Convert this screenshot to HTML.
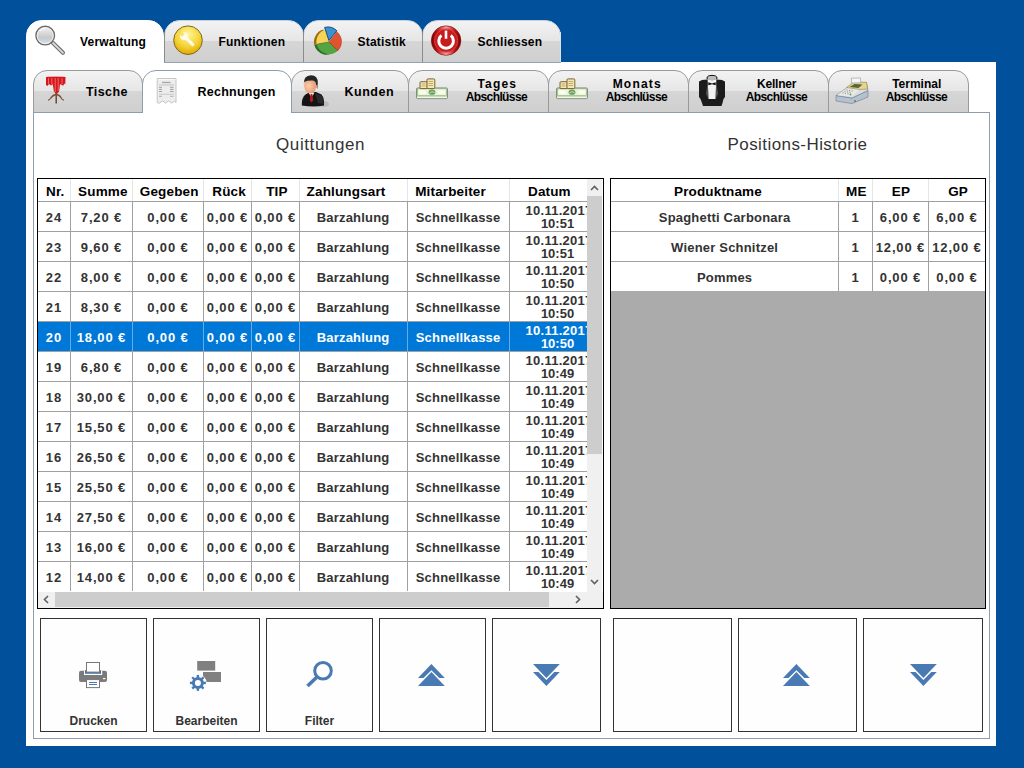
<!DOCTYPE html><html><head><meta charset="utf-8"><style>
*{margin:0;padding:0;box-sizing:border-box}
html,body{width:1024px;height:768px;overflow:hidden;background:#01509c;font-family:"Liberation Sans",sans-serif}
.a{position:absolute}
.t{position:absolute;white-space:nowrap;font-weight:bold}
.c{position:absolute;font-weight:bold;font-size:13px;color:#333;text-align:center;white-space:nowrap;line-height:15px}
.n{letter-spacing:0.85px;padding-left:0.85px}
.vl{position:absolute;width:1px;background:#a0a0a0}
.hl{position:absolute;height:1px;background:#a0a0a0}
.btn{position:absolute;border:1px solid #333;background:#fefefe}
svg{position:absolute;overflow:visible}
</style></head><body>

<div class="a" style="left:26px;top:62px;width:970px;height:684px;background:#fff"></div>
<svg width="0" height="0" style="left:0;top:0"><defs>
<linearGradient id="gi" x1="0" y1="0" x2="0" y2="1">
<stop offset="0" stop-color="#f3f3f3"/><stop offset="0.49" stop-color="#e6e6e6"/><stop offset="0.5" stop-color="#d6d6d6"/><stop offset="1" stop-color="#cfcfcf"/>
</linearGradient>
<radialGradient id="coin" cx="0.5" cy="0.3" r="0.7"><stop offset="0" stop-color="#fff59a"/><stop offset="0.6" stop-color="#f4d43a"/><stop offset="1" stop-color="#e0a800"/></radialGradient>
<radialGradient id="pwr" cx="0.5" cy="0.5" r="0.5"><stop offset="0.55" stop-color="#c81414"/><stop offset="0.85" stop-color="#e23a3a"/><stop offset="1" stop-color="#9a0a0a"/></radialGradient>
<linearGradient id="lens" x1="0" y1="0" x2="0" y2="1"><stop offset="0" stop-color="#f4f4f4"/><stop offset="0.6" stop-color="#c9c9c9"/><stop offset="1" stop-color="#cfe3f5"/></linearGradient>
</defs></svg>
<svg style="left:164px;top:20px" width="140" height="43"><path d="M0.5,42 L0.5,15.5 A15,15 0 0 1 15.5,0.5 L124.5,0.5 A15,15 0 0 1 139.5,15.5 L139.5,42 Z" fill="url(#gi)" stroke="none"/><path d="M0.5,42 L0.5,15.5 A15,15 0 0 1 15.5,0.5 L124.5,0.5 A15,15 0 0 1 139.5,15.5 L139.5,42" fill="none" stroke="#c8d2dc" stroke-width="1"/><path d="M0.5,42 L0.5,12" fill="none" stroke="#8c8c8c" stroke-width="1"/><path d="M139.5,12 L139.5,42" fill="none" stroke="#8c8c8c" stroke-width="1"/><line x1="0" y1="42.5" x2="140" y2="42.5" stroke="#94a3b3"/></svg>
<svg style="left:303px;top:20px" width="120" height="43"><path d="M0.5,42 L0.5,15.5 A15,15 0 0 1 15.5,0.5 L104.5,0.5 A15,15 0 0 1 119.5,15.5 L119.5,42 Z" fill="url(#gi)" stroke="none"/><path d="M0.5,42 L0.5,15.5 A15,15 0 0 1 15.5,0.5 L104.5,0.5 A15,15 0 0 1 119.5,15.5 L119.5,42" fill="none" stroke="#c8d2dc" stroke-width="1"/><path d="M0.5,42 L0.5,12" fill="none" stroke="#8c8c8c" stroke-width="1"/><path d="M119.5,12 L119.5,42" fill="none" stroke="#8c8c8c" stroke-width="1"/><line x1="0" y1="42.5" x2="120" y2="42.5" stroke="#94a3b3"/></svg>
<svg style="left:422px;top:20px" width="139" height="43"><path d="M0.5,42 L0.5,15.5 A15,15 0 0 1 15.5,0.5 L123.5,0.5 A15,15 0 0 1 138.5,15.5 L138.5,42 Z" fill="url(#gi)" stroke="none"/><path d="M0.5,42 L0.5,15.5 A15,15 0 0 1 15.5,0.5 L123.5,0.5 A15,15 0 0 1 138.5,15.5 L138.5,42" fill="none" stroke="#c8d2dc" stroke-width="1"/><path d="M0.5,42 L0.5,12" fill="none" stroke="#8c8c8c" stroke-width="1"/><path d="M138.5,12 L138.5,42" fill="none" stroke="#d8e0e8" stroke-width="1"/><line x1="0" y1="42.5" x2="139" y2="42.5" stroke="#94a3b3"/></svg>
<svg style="left:26px;top:20px" width="138" height="43"><path d="M0.5,42 L0.5,15.5 A15,15 0 0 1 15.5,0.5 L122.5,0.5 A15,15 0 0 1 137.5,15.5 L137.5,42 Z" fill="#fff" stroke="none"/><path d="M0.5,42 L0.5,15.5 A15,15 0 0 1 15.5,0.5 L122.5,0.5 A15,15 0 0 1 137.5,15.5 L137.5,42" fill="none" stroke="#ffffff" stroke-width="1"/></svg>
<div class="a" style="left:33px;top:112px;width:957px;height:627px;border:1px solid #8e9cab"></div>
<svg style="left:33px;top:70px" width="110" height="43"><path d="M0.5,42 L0.5,14.0 A13.5,13.5 0 0 1 14.0,0.5 L96.0,0.5 A13.5,13.5 0 0 1 109.5,14.0 L109.5,42 Z" fill="url(#gi)" stroke="none"/><path d="M0.5,42 L0.5,14.0 A13.5,13.5 0 0 1 14.0,0.5 L96.0,0.5 A13.5,13.5 0 0 1 109.5,14.0 L109.5,42" fill="none" stroke="#9a9a9a" stroke-width="1"/><line x1="0" y1="42.5" x2="110" y2="42.5" stroke="#8e9cab"/></svg>
<svg style="left:291px;top:70px" width="118" height="43"><path d="M0.5,42 L0.5,14.0 A13.5,13.5 0 0 1 14.0,0.5 L104.0,0.5 A13.5,13.5 0 0 1 117.5,14.0 L117.5,42 Z" fill="url(#gi)" stroke="none"/><path d="M0.5,42 L0.5,14.0 A13.5,13.5 0 0 1 14.0,0.5 L104.0,0.5 A13.5,13.5 0 0 1 117.5,14.0 L117.5,42" fill="none" stroke="#9a9a9a" stroke-width="1"/><line x1="0" y1="42.5" x2="118" y2="42.5" stroke="#8e9cab"/></svg>
<svg style="left:408px;top:70px" width="141" height="43"><path d="M0.5,42 L0.5,14.0 A13.5,13.5 0 0 1 14.0,0.5 L127.0,0.5 A13.5,13.5 0 0 1 140.5,14.0 L140.5,42 Z" fill="url(#gi)" stroke="none"/><path d="M0.5,42 L0.5,14.0 A13.5,13.5 0 0 1 14.0,0.5 L127.0,0.5 A13.5,13.5 0 0 1 140.5,14.0 L140.5,42" fill="none" stroke="#9a9a9a" stroke-width="1"/><line x1="0" y1="42.5" x2="141" y2="42.5" stroke="#8e9cab"/></svg>
<svg style="left:548px;top:70px" width="141" height="43"><path d="M0.5,42 L0.5,14.0 A13.5,13.5 0 0 1 14.0,0.5 L127.0,0.5 A13.5,13.5 0 0 1 140.5,14.0 L140.5,42 Z" fill="url(#gi)" stroke="none"/><path d="M0.5,42 L0.5,14.0 A13.5,13.5 0 0 1 14.0,0.5 L127.0,0.5 A13.5,13.5 0 0 1 140.5,14.0 L140.5,42" fill="none" stroke="#9a9a9a" stroke-width="1"/><line x1="0" y1="42.5" x2="141" y2="42.5" stroke="#8e9cab"/></svg>
<svg style="left:688px;top:70px" width="141" height="43"><path d="M0.5,42 L0.5,14.0 A13.5,13.5 0 0 1 14.0,0.5 L127.0,0.5 A13.5,13.5 0 0 1 140.5,14.0 L140.5,42 Z" fill="url(#gi)" stroke="none"/><path d="M0.5,42 L0.5,14.0 A13.5,13.5 0 0 1 14.0,0.5 L127.0,0.5 A13.5,13.5 0 0 1 140.5,14.0 L140.5,42" fill="none" stroke="#9a9a9a" stroke-width="1"/><line x1="0" y1="42.5" x2="141" y2="42.5" stroke="#8e9cab"/></svg>
<svg style="left:828px;top:70px" width="141" height="43"><path d="M0.5,42 L0.5,14.0 A13.5,13.5 0 0 1 14.0,0.5 L127.0,0.5 A13.5,13.5 0 0 1 140.5,14.0 L140.5,42 Z" fill="url(#gi)" stroke="none"/><path d="M0.5,42 L0.5,14.0 A13.5,13.5 0 0 1 14.0,0.5 L127.0,0.5 A13.5,13.5 0 0 1 140.5,14.0 L140.5,42" fill="none" stroke="#9a9a9a" stroke-width="1"/><line x1="0" y1="42.5" x2="141" y2="42.5" stroke="#8e9cab"/></svg>
<svg style="left:142px;top:70px" width="150" height="43"><path d="M0.5,42 L0.5,14.0 A13.5,13.5 0 0 1 14.0,0.5 L136.0,0.5 A13.5,13.5 0 0 1 149.5,14.0 L149.5,42 Z" fill="#fff" stroke="none"/><path d="M0.5,42 L0.5,14.0 A13.5,13.5 0 0 1 14.0,0.5 L136.0,0.5 A13.5,13.5 0 0 1 149.5,14.0 L149.5,42" fill="none" stroke="#8e9cab" stroke-width="1"/></svg>
<div class="a" style="left:143px;top:112px;width:148px;height:1px;background:#fff"></div>
<div class="t" style="left:80px;top:35px;font-size:12px;letter-spacing:0.2px;color:#000">Verwaltung</div>
<div class="t" style="left:218.5px;top:35px;font-size:12px;letter-spacing:0.2px;color:#000">Funktionen</div>
<div class="t" style="left:357.5px;top:35px;font-size:12px;letter-spacing:0.2px;color:#000">Statistik</div>
<div class="t" style="left:477.5px;top:35px;font-size:12px;letter-spacing:0.2px;color:#000">Schliessen</div>
<div class="t" style="left:86px;top:85px;font-size:12.5px;color:#000;letter-spacing:0.4px">Tische</div>
<div class="t" style="left:197.5px;top:85px;font-size:12.5px;color:#000;letter-spacing:0.25px">Rechnungen</div>
<div class="t" style="left:344.5px;top:85px;font-size:12.5px;color:#000;letter-spacing:0.5px">Kunden</div>
<div class="t" style="left:446.7px;width:100px;text-align:center;top:78px;font-size:12px;line-height:13px;color:#000"><span style="letter-spacing:1.2px;margin-right:-1.2px">Tages</span><br><span style="letter-spacing:-0.6px;margin-right:0.6px">Abschlüsse</span></div>
<div class="t" style="left:586.7px;width:100px;text-align:center;top:78px;font-size:12px;line-height:13px;color:#000"><span style="letter-spacing:1.2px;margin-right:-1.2px">Monats</span><br><span style="letter-spacing:-0.6px;margin-right:0.6px">Abschlüsse</span></div>
<div class="t" style="left:726.7px;width:100px;text-align:center;top:78px;font-size:12px;line-height:13px;color:#000"><span style="letter-spacing:-0.2px;margin-right:0.2px">Kellner</span><br><span style="letter-spacing:-0.6px;margin-right:0.6px">Abschlüsse</span></div>
<div class="t" style="left:866.7px;width:100px;text-align:center;top:78px;font-size:12px;line-height:13px;color:#000"><span style="letter-spacing:0px;margin-right:0px">Terminal</span><br><span style="letter-spacing:-0.6px;margin-right:0.6px">Abschlüsse</span></div>
<div class="t" style="left:276px;top:135px;font-size:17px;font-weight:normal;letter-spacing:0.6px;color:#333">Quittungen</div>
<div class="t" style="left:727.5px;top:135px;font-size:17px;font-weight:normal;letter-spacing:0.43px;color:#333">Positions-Historie</div>
<div class="a" style="left:37px;top:178px;width:567px;height:431px;border:1px solid #000;background:#fff;overflow:hidden">
<div class="t" style="left:8.0px;top:5px;font-size:13.5px;color:#000;letter-spacing:0.15px">Nr.</div>
<div class="t" style="left:40.10000000000001px;top:5px;font-size:13.5px;color:#000;letter-spacing:0.15px">Summe</div>
<div class="t" style="left:101.80000000000001px;top:5px;font-size:13.5px;color:#000;letter-spacing:0.15px">Gegeben</div>
<div class="t" style="left:174.3px;top:5px;font-size:13.5px;color:#000;letter-spacing:0.15px">Rück</div>
<div class="t" style="left:228.2px;top:5px;font-size:13.5px;color:#000;letter-spacing:0.15px">TIP</div>
<div class="t" style="left:268.59999999999997px;top:5px;font-size:13.5px;color:#000;letter-spacing:0.15px">Zahlungsart</div>
<div class="t" style="left:377.2px;top:5px;font-size:13.5px;color:#000;letter-spacing:0.15px">Mitarbeiter</div>
<div class="t" style="left:490.0px;top:5px;font-size:13.5px;color:#000;letter-spacing:0.15px">Datum</div>
<div class="a" style="left:32px;top:0px;width:1px;height:22px;background:#e6e6e6"></div>
<div class="a" style="left:94px;top:0px;width:1px;height:22px;background:#e6e6e6"></div>
<div class="a" style="left:165px;top:0px;width:1px;height:22px;background:#e6e6e6"></div>
<div class="a" style="left:213px;top:0px;width:1px;height:22px;background:#e6e6e6"></div>
<div class="a" style="left:261px;top:0px;width:1px;height:22px;background:#e6e6e6"></div>
<div class="a" style="left:369px;top:0px;width:1px;height:22px;background:#e6e6e6"></div>
<div class="a" style="left:471px;top:0px;width:1px;height:22px;background:#e6e6e6"></div>
<div class="hl" style="left:0px;top:22px;width:549px"></div>
<div class="c n" style="left:-1px;top:31px;width:33px;color:#333">24</div>
<div class="c n" style="left:32px;top:31px;width:62px;color:#333">7,20 €</div>
<div class="c n" style="left:94px;top:31px;width:71px;color:#333">0,00 €</div>
<div class="c n" style="left:165px;top:31px;width:48px;color:#333">0,00 €</div>
<div class="c n" style="left:213px;top:31px;width:48px;color:#333">0,00 €</div>
<div class="c" style="left:261px;top:31px;width:108px;color:#333;letter-spacing:0.2px;padding-left:0.2px">Barzahlung</div>
<div class="c" style="left:369px;top:31px;width:102px;color:#333;letter-spacing:0.2px;padding-left:0.2px">Schnellkasse</div>
<div class="c" style="left:471px;top:25px;width:97px;font-size:13px;line-height:13px;color:#333;letter-spacing:0px"><span style="letter-spacing:0.25px;position:relative;left:1.5px">10.11.2017</span><br>10:51</div>
<div class="hl" style="left:0px;top:52px;width:549px"></div>
<div class="c n" style="left:-1px;top:61px;width:33px;color:#333">23</div>
<div class="c n" style="left:32px;top:61px;width:62px;color:#333">9,60 €</div>
<div class="c n" style="left:94px;top:61px;width:71px;color:#333">0,00 €</div>
<div class="c n" style="left:165px;top:61px;width:48px;color:#333">0,00 €</div>
<div class="c n" style="left:213px;top:61px;width:48px;color:#333">0,00 €</div>
<div class="c" style="left:261px;top:61px;width:108px;color:#333;letter-spacing:0.2px;padding-left:0.2px">Barzahlung</div>
<div class="c" style="left:369px;top:61px;width:102px;color:#333;letter-spacing:0.2px;padding-left:0.2px">Schnellkasse</div>
<div class="c" style="left:471px;top:55px;width:97px;font-size:13px;line-height:13px;color:#333;letter-spacing:0px"><span style="letter-spacing:0.25px;position:relative;left:1.5px">10.11.2017</span><br>10:51</div>
<div class="hl" style="left:0px;top:82px;width:549px"></div>
<div class="c n" style="left:-1px;top:91px;width:33px;color:#333">22</div>
<div class="c n" style="left:32px;top:91px;width:62px;color:#333">8,00 €</div>
<div class="c n" style="left:94px;top:91px;width:71px;color:#333">0,00 €</div>
<div class="c n" style="left:165px;top:91px;width:48px;color:#333">0,00 €</div>
<div class="c n" style="left:213px;top:91px;width:48px;color:#333">0,00 €</div>
<div class="c" style="left:261px;top:91px;width:108px;color:#333;letter-spacing:0.2px;padding-left:0.2px">Barzahlung</div>
<div class="c" style="left:369px;top:91px;width:102px;color:#333;letter-spacing:0.2px;padding-left:0.2px">Schnellkasse</div>
<div class="c" style="left:471px;top:85px;width:97px;font-size:13px;line-height:13px;color:#333;letter-spacing:0px"><span style="letter-spacing:0.25px;position:relative;left:1.5px">10.11.2017</span><br>10:50</div>
<div class="hl" style="left:0px;top:112px;width:549px"></div>
<div class="c n" style="left:-1px;top:121px;width:33px;color:#333">21</div>
<div class="c n" style="left:32px;top:121px;width:62px;color:#333">8,30 €</div>
<div class="c n" style="left:94px;top:121px;width:71px;color:#333">0,00 €</div>
<div class="c n" style="left:165px;top:121px;width:48px;color:#333">0,00 €</div>
<div class="c n" style="left:213px;top:121px;width:48px;color:#333">0,00 €</div>
<div class="c" style="left:261px;top:121px;width:108px;color:#333;letter-spacing:0.2px;padding-left:0.2px">Barzahlung</div>
<div class="c" style="left:369px;top:121px;width:102px;color:#333;letter-spacing:0.2px;padding-left:0.2px">Schnellkasse</div>
<div class="c" style="left:471px;top:115px;width:97px;font-size:13px;line-height:13px;color:#333;letter-spacing:0px"><span style="letter-spacing:0.25px;position:relative;left:1.5px">10.11.2017</span><br>10:50</div>
<div class="hl" style="left:0px;top:142px;width:549px"></div>
<div class="a" style="left:0px;top:143px;width:549px;height:29px;background:#0078d7"></div>
<div class="c n" style="left:-1px;top:151px;width:33px;color:#fff">20</div>
<div class="c n" style="left:32px;top:151px;width:62px;color:#fff">18,00 €</div>
<div class="c n" style="left:94px;top:151px;width:71px;color:#fff">0,00 €</div>
<div class="c n" style="left:165px;top:151px;width:48px;color:#fff">0,00 €</div>
<div class="c n" style="left:213px;top:151px;width:48px;color:#fff">0,00 €</div>
<div class="c" style="left:261px;top:151px;width:108px;color:#fff;letter-spacing:0.2px;padding-left:0.2px">Barzahlung</div>
<div class="c" style="left:369px;top:151px;width:102px;color:#fff;letter-spacing:0.2px;padding-left:0.2px">Schnellkasse</div>
<div class="c" style="left:471px;top:145px;width:97px;font-size:13px;line-height:13px;color:#fff;letter-spacing:0px"><span style="letter-spacing:0.25px;position:relative;left:1.5px">10.11.2017</span><br>10:50</div>
<div class="hl" style="left:0px;top:172px;width:549px"></div>
<div class="c n" style="left:-1px;top:181px;width:33px;color:#333">19</div>
<div class="c n" style="left:32px;top:181px;width:62px;color:#333">6,80 €</div>
<div class="c n" style="left:94px;top:181px;width:71px;color:#333">0,00 €</div>
<div class="c n" style="left:165px;top:181px;width:48px;color:#333">0,00 €</div>
<div class="c n" style="left:213px;top:181px;width:48px;color:#333">0,00 €</div>
<div class="c" style="left:261px;top:181px;width:108px;color:#333;letter-spacing:0.2px;padding-left:0.2px">Barzahlung</div>
<div class="c" style="left:369px;top:181px;width:102px;color:#333;letter-spacing:0.2px;padding-left:0.2px">Schnellkasse</div>
<div class="c" style="left:471px;top:175px;width:97px;font-size:13px;line-height:13px;color:#333;letter-spacing:0px"><span style="letter-spacing:0.25px;position:relative;left:1.5px">10.11.2017</span><br>10:49</div>
<div class="hl" style="left:0px;top:202px;width:549px"></div>
<div class="c n" style="left:-1px;top:211px;width:33px;color:#333">18</div>
<div class="c n" style="left:32px;top:211px;width:62px;color:#333">30,00 €</div>
<div class="c n" style="left:94px;top:211px;width:71px;color:#333">0,00 €</div>
<div class="c n" style="left:165px;top:211px;width:48px;color:#333">0,00 €</div>
<div class="c n" style="left:213px;top:211px;width:48px;color:#333">0,00 €</div>
<div class="c" style="left:261px;top:211px;width:108px;color:#333;letter-spacing:0.2px;padding-left:0.2px">Barzahlung</div>
<div class="c" style="left:369px;top:211px;width:102px;color:#333;letter-spacing:0.2px;padding-left:0.2px">Schnellkasse</div>
<div class="c" style="left:471px;top:205px;width:97px;font-size:13px;line-height:13px;color:#333;letter-spacing:0px"><span style="letter-spacing:0.25px;position:relative;left:1.5px">10.11.2017</span><br>10:49</div>
<div class="hl" style="left:0px;top:232px;width:549px"></div>
<div class="c n" style="left:-1px;top:241px;width:33px;color:#333">17</div>
<div class="c n" style="left:32px;top:241px;width:62px;color:#333">15,50 €</div>
<div class="c n" style="left:94px;top:241px;width:71px;color:#333">0,00 €</div>
<div class="c n" style="left:165px;top:241px;width:48px;color:#333">0,00 €</div>
<div class="c n" style="left:213px;top:241px;width:48px;color:#333">0,00 €</div>
<div class="c" style="left:261px;top:241px;width:108px;color:#333;letter-spacing:0.2px;padding-left:0.2px">Barzahlung</div>
<div class="c" style="left:369px;top:241px;width:102px;color:#333;letter-spacing:0.2px;padding-left:0.2px">Schnellkasse</div>
<div class="c" style="left:471px;top:235px;width:97px;font-size:13px;line-height:13px;color:#333;letter-spacing:0px"><span style="letter-spacing:0.25px;position:relative;left:1.5px">10.11.2017</span><br>10:49</div>
<div class="hl" style="left:0px;top:262px;width:549px"></div>
<div class="c n" style="left:-1px;top:271px;width:33px;color:#333">16</div>
<div class="c n" style="left:32px;top:271px;width:62px;color:#333">26,50 €</div>
<div class="c n" style="left:94px;top:271px;width:71px;color:#333">0,00 €</div>
<div class="c n" style="left:165px;top:271px;width:48px;color:#333">0,00 €</div>
<div class="c n" style="left:213px;top:271px;width:48px;color:#333">0,00 €</div>
<div class="c" style="left:261px;top:271px;width:108px;color:#333;letter-spacing:0.2px;padding-left:0.2px">Barzahlung</div>
<div class="c" style="left:369px;top:271px;width:102px;color:#333;letter-spacing:0.2px;padding-left:0.2px">Schnellkasse</div>
<div class="c" style="left:471px;top:265px;width:97px;font-size:13px;line-height:13px;color:#333;letter-spacing:0px"><span style="letter-spacing:0.25px;position:relative;left:1.5px">10.11.2017</span><br>10:49</div>
<div class="hl" style="left:0px;top:292px;width:549px"></div>
<div class="c n" style="left:-1px;top:301px;width:33px;color:#333">15</div>
<div class="c n" style="left:32px;top:301px;width:62px;color:#333">25,50 €</div>
<div class="c n" style="left:94px;top:301px;width:71px;color:#333">0,00 €</div>
<div class="c n" style="left:165px;top:301px;width:48px;color:#333">0,00 €</div>
<div class="c n" style="left:213px;top:301px;width:48px;color:#333">0,00 €</div>
<div class="c" style="left:261px;top:301px;width:108px;color:#333;letter-spacing:0.2px;padding-left:0.2px">Barzahlung</div>
<div class="c" style="left:369px;top:301px;width:102px;color:#333;letter-spacing:0.2px;padding-left:0.2px">Schnellkasse</div>
<div class="c" style="left:471px;top:295px;width:97px;font-size:13px;line-height:13px;color:#333;letter-spacing:0px"><span style="letter-spacing:0.25px;position:relative;left:1.5px">10.11.2017</span><br>10:49</div>
<div class="hl" style="left:0px;top:322px;width:549px"></div>
<div class="c n" style="left:-1px;top:331px;width:33px;color:#333">14</div>
<div class="c n" style="left:32px;top:331px;width:62px;color:#333">27,50 €</div>
<div class="c n" style="left:94px;top:331px;width:71px;color:#333">0,00 €</div>
<div class="c n" style="left:165px;top:331px;width:48px;color:#333">0,00 €</div>
<div class="c n" style="left:213px;top:331px;width:48px;color:#333">0,00 €</div>
<div class="c" style="left:261px;top:331px;width:108px;color:#333;letter-spacing:0.2px;padding-left:0.2px">Barzahlung</div>
<div class="c" style="left:369px;top:331px;width:102px;color:#333;letter-spacing:0.2px;padding-left:0.2px">Schnellkasse</div>
<div class="c" style="left:471px;top:325px;width:97px;font-size:13px;line-height:13px;color:#333;letter-spacing:0px"><span style="letter-spacing:0.25px;position:relative;left:1.5px">10.11.2017</span><br>10:49</div>
<div class="hl" style="left:0px;top:352px;width:549px"></div>
<div class="c n" style="left:-1px;top:361px;width:33px;color:#333">13</div>
<div class="c n" style="left:32px;top:361px;width:62px;color:#333">16,00 €</div>
<div class="c n" style="left:94px;top:361px;width:71px;color:#333">0,00 €</div>
<div class="c n" style="left:165px;top:361px;width:48px;color:#333">0,00 €</div>
<div class="c n" style="left:213px;top:361px;width:48px;color:#333">0,00 €</div>
<div class="c" style="left:261px;top:361px;width:108px;color:#333;letter-spacing:0.2px;padding-left:0.2px">Barzahlung</div>
<div class="c" style="left:369px;top:361px;width:102px;color:#333;letter-spacing:0.2px;padding-left:0.2px">Schnellkasse</div>
<div class="c" style="left:471px;top:355px;width:97px;font-size:13px;line-height:13px;color:#333;letter-spacing:0px"><span style="letter-spacing:0.25px;position:relative;left:1.5px">10.11.2017</span><br>10:49</div>
<div class="hl" style="left:0px;top:382px;width:549px"></div>
<div class="c n" style="left:-1px;top:391px;width:33px;color:#333">12</div>
<div class="c n" style="left:32px;top:391px;width:62px;color:#333">14,00 €</div>
<div class="c n" style="left:94px;top:391px;width:71px;color:#333">0,00 €</div>
<div class="c n" style="left:165px;top:391px;width:48px;color:#333">0,00 €</div>
<div class="c n" style="left:213px;top:391px;width:48px;color:#333">0,00 €</div>
<div class="c" style="left:261px;top:391px;width:108px;color:#333;letter-spacing:0.2px;padding-left:0.2px">Barzahlung</div>
<div class="c" style="left:369px;top:391px;width:102px;color:#333;letter-spacing:0.2px;padding-left:0.2px">Schnellkasse</div>
<div class="c" style="left:471px;top:385px;width:97px;font-size:13px;line-height:13px;color:#333;letter-spacing:0px"><span style="letter-spacing:0.25px;position:relative;left:1.5px">10.11.2017</span><br>10:49</div>
<div class="vl" style="left:32px;top:23px;height:389px"></div>
<div class="vl" style="left:94px;top:23px;height:389px"></div>
<div class="vl" style="left:165px;top:23px;height:389px"></div>
<div class="vl" style="left:213px;top:23px;height:389px"></div>
<div class="vl" style="left:261px;top:23px;height:389px"></div>
<div class="vl" style="left:369px;top:23px;height:389px"></div>
<div class="vl" style="left:471px;top:23px;height:389px"></div>
<div class="a" style="left:32px;top:143px;width:1px;height:29px;background:#62acec"></div>
<div class="a" style="left:94px;top:143px;width:1px;height:29px;background:#62acec"></div>
<div class="a" style="left:165px;top:143px;width:1px;height:29px;background:#62acec"></div>
<div class="a" style="left:213px;top:143px;width:1px;height:29px;background:#62acec"></div>
<div class="a" style="left:261px;top:143px;width:1px;height:29px;background:#62acec"></div>
<div class="a" style="left:369px;top:143px;width:1px;height:29px;background:#62acec"></div>
<div class="a" style="left:471px;top:143px;width:1px;height:29px;background:#62acec"></div>
<div class="a" style="left:549px;top:0px;width:15px;height:413px;background:#f0f0f0"></div>
<div class="a" style="left:564px;top:0px;width:1px;height:413px;background:#fff"></div>
<div class="a" style="left:549px;top:17px;width:15px;height:258px;background:#cdcdcd"></div>
<svg style="left:552px;top:6px" width="9" height="6"><path d="M1,5 L4.5,1.5 L8,5" fill="none" stroke="#606060" stroke-width="1.6"/></svg>
<svg style="left:552px;top:400px" width="9" height="6"><path d="M1,1 L4.5,4.5 L8,1" fill="none" stroke="#606060" stroke-width="1.6"/></svg>
<div class="a" style="left:0px;top:413px;width:565px;height:16px;background:#f0f0f0"></div>
<div class="a" style="left:17px;top:413px;width:494px;height:15px;background:#cdcdcd"></div>
<svg style="left:5px;top:416px" width="6" height="9"><path d="M5,1 L1.5,4.5 L5,8" fill="none" stroke="#606060" stroke-width="1.6"/></svg>
<svg style="left:537px;top:416px" width="6" height="9"><path d="M1,1 L4.5,4.5 L1,8" fill="none" stroke="#606060" stroke-width="1.6"/></svg>
</div>
<div class="a" style="left:610px;top:178px;width:376px;height:431px;border:1px solid #000;background:#ababab;overflow:hidden">
<div class="a" style="left:0px;top:0px;width:374px;height:112px;background:#fff"></div>
<div class="t" style="left:63.0px;top:5px;font-size:13.5px;color:#000;letter-spacing:0.15px">Produktname</div>
<div class="t" style="left:235.10000000000002px;top:5px;font-size:13.5px;color:#000;letter-spacing:0.15px">ME</div>
<div class="t" style="left:280.79999999999995px;top:5px;font-size:13.5px;color:#000;letter-spacing:0.15px">EP</div>
<div class="t" style="left:337.19999999999993px;top:5px;font-size:13.5px;color:#000;letter-spacing:0.15px">GP</div>
<div class="a" style="left:227px;top:0px;width:1px;height:22px;background:#e6e6e6"></div>
<div class="a" style="left:261px;top:0px;width:1px;height:22px;background:#e6e6e6"></div>
<div class="a" style="left:317px;top:0px;width:1px;height:22px;background:#e6e6e6"></div>
<div class="hl" style="left:0px;top:22px;width:374px"></div>
<div class="c" style="left:0px;top:31px;width:227px;letter-spacing:0.2px;padding-left:0.2px">Spaghetti Carbonara</div>
<div class="c n" style="left:227px;top:31px;width:34px">1</div>
<div class="c n" style="left:261px;top:31px;width:56px">6,00 €</div>
<div class="c n" style="left:317px;top:31px;width:57px">6,00 €</div>
<div class="hl" style="left:0px;top:52px;width:374px"></div>
<div class="c" style="left:0px;top:61px;width:227px;letter-spacing:0.2px;padding-left:0.2px">Wiener Schnitzel</div>
<div class="c n" style="left:227px;top:61px;width:34px">1</div>
<div class="c n" style="left:261px;top:61px;width:56px">12,00 €</div>
<div class="c n" style="left:317px;top:61px;width:57px">12,00 €</div>
<div class="hl" style="left:0px;top:82px;width:374px"></div>
<div class="c" style="left:0px;top:91px;width:227px;letter-spacing:0.2px;padding-left:0.2px">Pommes</div>
<div class="c n" style="left:227px;top:91px;width:34px">1</div>
<div class="c n" style="left:261px;top:91px;width:56px">0,00 €</div>
<div class="c n" style="left:317px;top:91px;width:57px">0,00 €</div>
<div class="vl" style="left:227px;top:23px;height:89px"></div>
<div class="vl" style="left:261px;top:23px;height:89px"></div>
<div class="vl" style="left:317px;top:23px;height:89px"></div>
</div>
<div class="btn" style="left:40px;top:618px;width:107px;height:114px"></div>
<div class="t" style="left:40px;width:107px;text-align:center;top:714px;font-size:12px;color:#333">Drucken</div>
<div class="btn" style="left:153px;top:618px;width:107px;height:114px"></div>
<div class="t" style="left:153px;width:107px;text-align:center;top:714px;font-size:12px;color:#333">Bearbeiten</div>
<div class="btn" style="left:266px;top:618px;width:107px;height:114px"></div>
<div class="t" style="left:266px;width:107px;text-align:center;top:714px;font-size:12px;color:#333">Filter</div>
<div class="btn" style="left:379px;top:618px;width:107px;height:114px"></div>
<div class="btn" style="left:492px;top:618px;width:109px;height:114px"></div>
<div class="btn" style="left:613px;top:618px;width:119px;height:114px"></div>
<div class="btn" style="left:738px;top:618px;width:119px;height:114px"></div>
<div class="btn" style="left:863px;top:618px;width:120px;height:114px"></div>
<svg style="left:418.1px;top:663.6px" width="27" height="23"><path d="M0,14.1 L13.4,0 L26.8,14.1 L21.3,14.1 L13.4,6.2 L5.5,14.1 Z" fill="#4a7ab3"/><path d="M0,22.1 L13.4,8.1 L26.8,22.1 Z" fill="#4a7ab3"/></svg>
<svg style="left:533.1px;top:664.1px" width="27" height="23"><path d="M0,8.1 L13.4,22 L26.8,8.1 L21.3,8.1 L13.4,15.9 L5.5,8.1 Z" fill="#4a7ab3"/><path d="M0,0 L13.4,13.9 L26.8,0 Z" fill="#4a7ab3"/></svg>
<svg style="left:783.2px;top:663.6px" width="27" height="23"><path d="M0,14.1 L13.4,0 L26.8,14.1 L21.3,14.1 L13.4,6.2 L5.5,14.1 Z" fill="#4a7ab3"/><path d="M0,22.1 L13.4,8.1 L26.8,22.1 Z" fill="#4a7ab3"/></svg>
<svg style="left:910.2px;top:664.1px" width="27" height="23"><path d="M0,8.1 L13.4,22 L26.8,8.1 L21.3,8.1 L13.4,15.9 L5.5,8.1 Z" fill="#4a7ab3"/><path d="M0,0 L13.4,13.9 L26.8,0 Z" fill="#4a7ab3"/></svg>
<svg style="left:78px;top:660px" width="30" height="30">
<rect x="1" y="10.8" width="28" height="11.1" rx="2" fill="#7b7b7b"/>
<rect x="6" y="10.5" width="18.2" height="4.5" fill="#fefefe"/>
<rect x="7" y="10.2" width="16" height="3.6" fill="#4a76a8"/>
<rect x="8.5" y="2.5" width="13" height="9.6" fill="#fff" stroke="#777" stroke-width="1"/>
<rect x="25" y="18" width="2.4" height="1.2" fill="#fff"/>
<rect x="8.5" y="19.6" width="13" height="8" fill="#fff" stroke="#777" stroke-width="1"/>
<rect x="11" y="22" width="8" height="1" fill="#4a76a8"/>
<rect x="11" y="24" width="8" height="1" fill="#4a76a8"/>
</svg>
<svg style="left:185px;top:655px" width="40" height="40">
<rect x="12.2" y="6" width="18" height="9.6" fill="#808080"/>
<rect x="18" y="17" width="18" height="10" fill="#808080"/>
<g transform="translate(12.9,27.9)">
<circle r="8.6" fill="#fefefe"/>
<circle r="6" fill="#4a7ab3"/>
<g fill="#4a7ab3">
<rect x="-1.2" y="-8" width="2.4" height="16"/>
<rect x="-1.2" y="-8" width="2.4" height="16" transform="rotate(45)"/>
<rect x="-1.2" y="-8" width="2.4" height="16" transform="rotate(90)"/>
<rect x="-1.2" y="-8" width="2.4" height="16" transform="rotate(135)"/>
</g>
<circle r="3" fill="#fff"/>
</g>
</svg>
<svg style="left:300px;top:655px" width="40" height="40">
<circle cx="23" cy="15.8" r="8.3" fill="none" stroke="#4a7ab3" stroke-width="3"/>
<line x1="17" y1="22" x2="7.5" y2="31" stroke="#4a7ab3" stroke-width="3.6"/>
</svg>
<svg style="left:28px;top:20px" width="44" height="40">
<line x1="25" y1="23" x2="35" y2="32.8" stroke="#6e6e6e" stroke-width="4" stroke-linecap="round"/>
<line x1="25" y1="23" x2="35" y2="32.8" stroke="#dcdcdc" stroke-width="1.8" stroke-linecap="round"/>
<circle cx="17.2" cy="15.6" r="9.3" fill="url(#lens)" stroke="#6a6a6a" stroke-width="1.4"/>
<circle cx="17.2" cy="15.6" r="8" fill="none" stroke="#f4f4f4" stroke-width="0.9"/>
<path d="M12,11 Q14,8.5 17,8.5" stroke="#fff" stroke-width="1.2" fill="none" opacity="0.8"/>
</svg>
<svg style="left:168px;top:20px" width="44" height="42">
<circle cx="20" cy="20.2" r="14.3" fill="url(#coin)" stroke="#7d6b1e" stroke-width="1"/>
<g transform="translate(20,20) rotate(-45)">
<rect x="-1.6" y="-6" width="3.2" height="14" rx="1" fill="#fffbe8"/>
<path d="M-4,-7 A4.2,4.2 0 1 0 4,-7 L2,-9.5 L2,-6.5 L-2,-6.5 L-2,-9.5 Z" fill="#fffbe8"/>
</g>
</svg>
<svg style="left:307px;top:20px" width="44" height="42">
<path d="M19.5,22.5 L7.3,25 A12.8,12.8 0 0 1 16.5,9.6 Z" fill="#9a6e10"/>
<path d="M19.5,22.5 L28.5,31.2 A12.8,12.8 0 0 1 7.3,25 Z" fill="#2e6e22"/>
<path d="M21.9,21.9 L9.6,24.3 A12.8,12.8 0 0 1 18.9,9.5 Z" fill="#f6d458"/>
<path d="M21.9,21.9 L30.8,30.7 A12.8,12.8 0 0 1 9.6,24.3 Z" fill="#53a443"/>
<path d="M21.9,21.9 L29.9,11.9 A12.8,12.8 0 0 1 30.8,30.7 Z" fill="#e2532f" stroke="#a03010" stroke-width="0.5"/>
<path d="M21.9,20.5 L17.6,7.4 A12.8,12.8 0 0 1 29.9,10.8 Z" fill="#3b91d2" stroke="#173f70" stroke-width="0.9"/>
<path d="M21.9,21.9 L9.6,24.3 M21.9,21.9 L30.8,30.7" stroke="#5a5a20" stroke-width="0.5"/>
</svg>
<svg style="left:426px;top:20px" width="44" height="42">
<defs><linearGradient id="pw2" x1="0" y1="0" x2="1" y2="0"><stop offset="0" stop-color="#7a0000"/><stop offset="0.2" stop-color="#c01010"/><stop offset="0.5" stop-color="#f4a0a0"/><stop offset="0.8" stop-color="#c01010"/><stop offset="1" stop-color="#7a0000"/></linearGradient></defs>
<circle cx="20.1" cy="20.6" r="14.8" fill="url(#pw2)" stroke="#7a1010" stroke-width="0.6"/>
<circle cx="20.1" cy="20.6" r="11.3" fill="#c81c1c"/>
<ellipse cx="20.1" cy="20.6" rx="11.6" ry="11.6" fill="none" stroke="#d84040" stroke-width="1"/>
<path d="M15.4,15.4 A7.3,7.3 0 1 0 24.8,15.4" fill="none" stroke="#fff" stroke-width="3"/>
<line x1="20" y1="10.6" x2="20" y2="18.8" stroke="#fff" stroke-width="2.6"/>
</svg>
<svg style="left:40px;top:72px" width="36" height="36">
<ellipse cx="15.8" cy="5.2" rx="9.8" ry="0.9" fill="#f08080"/>
<path d="M6,5 L25.5,5 L25.3,12.5 L24.2,11.5 L23.3,13.8 L21,12.5 L20,12.2 L19.2,19 L17.5,21.5 L15.5,21.5 L13.8,19 L12.8,12.3 L11,13.5 L9,12 L7.5,14 L6,13 Z" fill="#d5161d"/>
<path d="M8.5,6 L8.5,12 M11.8,6 L11.8,12.5 M15.2,6 L15.2,20 M18.2,6 L18.2,19 M22,6 L22,12" stroke="#f47070" stroke-width="0.9"/>
<path d="M16.2,21 L16.2,31.5" stroke="#5a4030" stroke-width="1.4"/>
<path d="M16.2,22.5 Q12.5,23 10.5,26.5 Q9.5,28 8,28.2 M16.2,22.5 Q20,23 21.5,26.5 Q22.5,28 24,28.2" fill="none" stroke="#7a5434" stroke-width="1.3"/>
</svg>
<svg style="left:150px;top:74px" width="34" height="34">
<path d="M7.2,4.5 L26,4.5 L26,28.6 Q24.5,26.2 23,28.2 Q21.5,30.2 20,27.8 Q18.5,26 17,28 Q15.5,30.2 14,27.8 Q12.5,26 11,28 Q9,30.2 7.2,28.6 Z" fill="#ededed" stroke="#c6c6c6" stroke-width="1"/>
<rect x="8" y="5" width="17.5" height="1" fill="#f8f8f8"/>
<rect x="12" y="7.8" width="8.5" height="1.4" fill="#a8a8a8"/>
<rect x="9" y="10.6" width="15" height="0.8" fill="#b8b8b8"/>
<g fill="#a0a0a0"><rect x="9" y="12.8" width="3" height="1"/><rect x="20" y="12.8" width="3.5" height="1"/>
<rect x="9" y="14.9" width="3" height="1"/><rect x="20" y="14.9" width="3.5" height="1"/>
<rect x="9" y="17" width="3" height="1"/><rect x="20" y="17" width="3.5" height="1"/></g>
<rect x="9" y="19.8" width="15" height="0.8" fill="#c0c0c0"/>
<rect x="9" y="21.8" width="3" height="1" fill="#b0b0b0"/><rect x="20" y="21.8" width="3.5" height="1" fill="#b0b0b0"/>
</svg>
<svg style="left:292px;top:70px" width="44" height="42">
<defs><radialGradient id="skin" cx="0.4" cy="0.45" r="0.6"><stop offset="0" stop-color="#fcd0b0"/><stop offset="1" stop-color="#e89870"/></radialGradient></defs>
<ellipse cx="31.5" cy="34" rx="5.5" ry="3" fill="#a8a8a8" opacity="0.55"/>
<path d="M9.8,35.5 Q9.5,27.5 13.5,24.5 L18,22 L24,22 L29.5,24.5 Q32.5,28 32,35.5 Q22,37.5 9.8,35.5 Z" fill="#141414"/>
<path d="M23,23 L30,26 Q32,30 31.5,34 L26,33 Z" fill="#2a2a2a"/>
<path d="M16.5,22.5 L19.5,27.5 L22.5,22.5 Z" fill="#fafafa"/>
<path d="M18.6,24 L20.4,24 L21.2,30.5 L19.5,32.5 L17.8,30.5 Z" fill="#b81820"/>
<path d="M12.2,16 Q12,10 17.5,9.8 Q24,9.6 24,16 Q24,23 18.2,23.6 Q12.5,23 12.2,16 Z" fill="url(#skin)"/>
<path d="M11.8,14 Q11.5,5.5 19,5.2 Q26,5.2 25.8,13 L25.3,19 Q24.2,17 24,14 Q23.5,10.8 20,10.6 Q15,10.5 12.3,12 Z" fill="#262626"/>
<ellipse cx="24.3" cy="16.5" rx="1" ry="1.6" fill="#e89a78"/>
</svg>
<svg style="left:410px;top:72px" width="44" height="34">
<rect x="6.6" y="16" width="30.8" height="10.6" rx="1" fill="#e4efd8" stroke="#6f7a68" stroke-width="0.9"/>
<rect x="7.5" y="16.8" width="29" height="6.8" fill="#eaf4dc" stroke="#7aa86a" stroke-width="0.6"/>
<ellipse cx="12.5" cy="20.2" rx="3.6" ry="2.2" fill="#fafde8"/>
<ellipse cx="31.5" cy="20.2" rx="3.6" ry="2.2" fill="#fafde8"/>
<ellipse cx="22" cy="20.2" rx="3.4" ry="2.6" fill="#6a9e5e"/>
<path d="M19.5,21 Q22,18.5 24.5,20.5" stroke="#d8ecd0" stroke-width="0.8" fill="none"/>
<rect x="7.2" y="23.8" width="29.6" height="1.2" fill="#c8dcb8"/>
<rect x="7.2" y="25" width="29.6" height="1.2" fill="#eef6e4"/>
<rect x="10" y="9.7" width="7.3" height="6.9" rx="1" fill="#f4e8b0" stroke="#6e5628" stroke-width="0.9"/>
<rect x="17" y="6.9" width="7.8" height="9.7" rx="1" fill="#f4e8b0" stroke="#6e5628" stroke-width="0.9"/>
<path d="M11.5,12 h4 M11.5,14 h4 M18.5,9.5 h4.5 M18.5,11.5 h4.5 M18.5,13.5 h4.5" stroke="#a89050" stroke-width="0.7"/>
</svg>
<svg style="left:550px;top:72px" width="44" height="34">
<rect x="6.6" y="16" width="30.8" height="10.6" rx="1" fill="#e4efd8" stroke="#6f7a68" stroke-width="0.9"/>
<rect x="7.5" y="16.8" width="29" height="6.8" fill="#eaf4dc" stroke="#7aa86a" stroke-width="0.6"/>
<ellipse cx="12.5" cy="20.2" rx="3.6" ry="2.2" fill="#fafde8"/>
<ellipse cx="31.5" cy="20.2" rx="3.6" ry="2.2" fill="#fafde8"/>
<ellipse cx="22" cy="20.2" rx="3.4" ry="2.6" fill="#6a9e5e"/>
<path d="M19.5,21 Q22,18.5 24.5,20.5" stroke="#d8ecd0" stroke-width="0.8" fill="none"/>
<rect x="7.2" y="23.8" width="29.6" height="1.2" fill="#c8dcb8"/>
<rect x="7.2" y="25" width="29.6" height="1.2" fill="#eef6e4"/>
<rect x="10" y="9.7" width="7.3" height="6.9" rx="1" fill="#f4e8b0" stroke="#6e5628" stroke-width="0.9"/>
<rect x="17" y="6.9" width="7.8" height="9.7" rx="1" fill="#f4e8b0" stroke="#6e5628" stroke-width="0.9"/>
<path d="M11.5,12 h4 M11.5,14 h4 M18.5,9.5 h4.5 M18.5,11.5 h4.5 M18.5,13.5 h4.5" stroke="#a89050" stroke-width="0.7"/>
</svg>
<svg style="left:690px;top:70px" width="44" height="42">
<path d="M9,11.5 L12,10 L17,9.5 L27,9.5 L32,10 L35,11.5 L35,27 L33.5,29 L32.5,33 L31.5,36 L13,36 L12,33 L10.5,29 L9,27 Z" fill="#1c1c1c"/>
<path d="M17.8,11 L26.2,11 L25.6,29 L18.4,29 Z" fill="#f2f2f2"/>
<path d="M17.8,11 L18.4,29 L16,24 Z M26.2,11 L25.6,29 L28,24 Z" fill="#555"/>
<ellipse cx="22" cy="8" rx="5" ry="2.6" fill="#bdbdbd" stroke="#111" stroke-width="1"/>
<path d="M17.5,9 Q22,11.5 26.5,9 L26.2,11.5 L17.8,11.5 Z" fill="#fafafa"/>
<path d="M18.3,12.2 L22,13.4 L25.7,12.2 L25.7,15.3 L22,14.2 L18.3,15.3 Z" fill="#111"/>
</svg>
<svg style="left:830px;top:70px" width="44" height="42">
<path d="M6,25.5 L22,28 L38,20.5 L38,27 L22,33.6 L6,31 Z" fill="#b4c2d0" stroke="#6a7888" stroke-width="0.6"/>
<path d="M6,25.5 L23.5,13 L36.5,12.5 L38,20.5 L22,28 Z" fill="#d8dde2" stroke="#6a7888" stroke-width="0.6"/>
<path d="M7.2,25 L17.5,17.8 L30,19.5 L21.5,26.8 Z" fill="#e8e8e4"/>
<g fill="#9aa0a8"><circle cx="13" cy="23" r="0.7"/><circle cx="15.5" cy="23.4" r="0.7"/><circle cx="18" cy="23.8" r="0.7"/><circle cx="15" cy="21.5" r="0.7"/><circle cx="17.5" cy="21.9" r="0.7"/><circle cx="20" cy="22.3" r="0.7"/><circle cx="17" cy="20" r="0.7"/><circle cx="19.5" cy="20.4" r="0.7"/><circle cx="22" cy="20.8" r="0.7"/></g>
<circle cx="20.5" cy="24.5" r="0.9" fill="#5aa050"/>
<path d="M16.5,17.5 L23.5,12.2 L36.5,12.2 L37.5,19 L30,19.5 Z" fill="#e8d48a" stroke="#8a7a40" stroke-width="0.5"/>
<path d="M19.5,17 L24.5,14 L32.5,14.5 L28.5,18 Z" fill="#55663a"/>
<path d="M21.5,13 L21.3,8.2 L30.5,8 L30.8,12.8 Z" fill="#f4f6f8" stroke="#8a949e" stroke-width="0.6"/>
<circle cx="25" cy="31" r="0.8" fill="#445"/>
</svg>
</body></html>
